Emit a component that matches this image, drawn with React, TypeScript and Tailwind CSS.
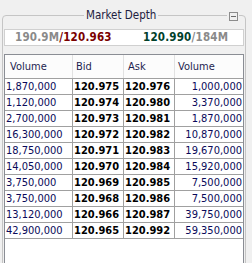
import React from "react";

type Row = { bidVol: string; bid: string; ask: string; askVol: string };

const rows: Row[] = [
  { bidVol: "1,870,000", bid: "120.975", ask: "120.976", askVol: "1,000,000" },
  { bidVol: "1,120,000", bid: "120.974", ask: "120.980", askVol: "3,370,000" },
  { bidVol: "2,700,000", bid: "120.973", ask: "120.981", askVol: "1,870,000" },
  { bidVol: "16,300,000", bid: "120.972", ask: "120.982", askVol: "10,870,000" },
  { bidVol: "18,750,000", bid: "120.971", ask: "120.983", askVol: "19,670,000" },
  { bidVol: "14,050,000", bid: "120.970", ask: "120.984", askVol: "15,920,000" },
  { bidVol: "3,750,000", bid: "120.969", ask: "120.985", askVol: "7,500,000" },
  { bidVol: "3,750,000", bid: "120.968", ask: "120.986", askVol: "7,500,000" },
  { bidVol: "13,120,000", bid: "120.966", ask: "120.987", askVol: "39,750,000" },
  { bidVol: "42,900,000", bid: "120.965", ask: "120.992", askVol: "59,350,000" },
];

export default function App() {
  return (
    <div className="relative w-[252px] h-[263px] overflow-hidden bg-[#f0f0f0] font-['DejaVu_Sans_Condensed','DejaVu_Sans',sans-serif] text-[11px]">
      <fieldset className="ml-[2px] mt-[8px] w-[244px] h-[300px] rounded-[4px] border border-[#c5c5c5] px-[1px] pt-0 pb-0 m-0">
        <legend className="ml-[80px] px-[2px] h-[14px] leading-[14px] text-[11.5px] text-[#1e2040]">Market Depth</legend>

        {/* best bid / best ask summary */}
        <div className="mt-[7px] h-[17px] grid grid-cols-2 items-center border border-[#d0d0d0] bg-white font-bold text-[11.5px] tracking-[0.2px] leading-[15px]">
          <div className="pl-[10px]">
            <span className="text-[#8a8a8a]">190.9M</span>
            <span className="text-[#7a0000]">/120.963</span>
          </div>
          <div className="pl-[19px]">
            <span className="text-[#00402a]">120.990</span>
            <span className="text-[#8a8a8a]">/184M</span>
          </div>
        </div>

        <div className="mt-[8px] h-[240px] border border-[#8a8d94] bg-white">
          <div className="flex h-[24px] border-b border-[#a0a0a0] bg-[#fcfcfc] text-[#1e1e50] leading-[23px]">
            <div className="w-[68px] pl-[5px] border-r border-[#e2e2e2]">Volume</div>
            <div className="w-[51px] pl-[3px] border-r border-[#e2e2e2]">Bid</div>
            <div className="w-[51px] pl-[4px] border-r border-[#e2e2e2]">Ask</div>
            <div className="w-[68px] pl-[3px]">Volume</div>
          </div>
          {rows.map((r, i) => (
            <div key={i} className="flex h-[16px] border-b border-[#a0a0a0] leading-[15px]">
              <div className="w-[68px] pl-[1px] border-r border-[#a0a0a0] text-[#0a0a5a]">{r.bidVol}</div>
              <div className="w-[51px] pl-[1px] border-r border-[#a0a0a0] font-bold text-black">{r.bid}</div>
              <div className="w-[51px] pl-[1px] border-r border-[#a0a0a0] font-bold text-black">{r.ask}</div>
              <div className="w-[68px] pr-[1px] text-right text-[#0a0a5a]">{r.askVol}</div>
            </div>
          ))}
        </div>
      </fieldset>

      {/* collapse button sitting on the group border */}
      <div className="absolute left-[227px] top-[10px] w-[12px] h-[12px] flex items-center justify-center bg-[#f0f0f0]">
        <div className="w-[9px] h-[9px] border border-[#8c8c8c] flex items-center justify-center">
          <div className="w-[5px] h-px bg-[#6c6c6c]" />
        </div>
      </div>
    </div>
  );
}
